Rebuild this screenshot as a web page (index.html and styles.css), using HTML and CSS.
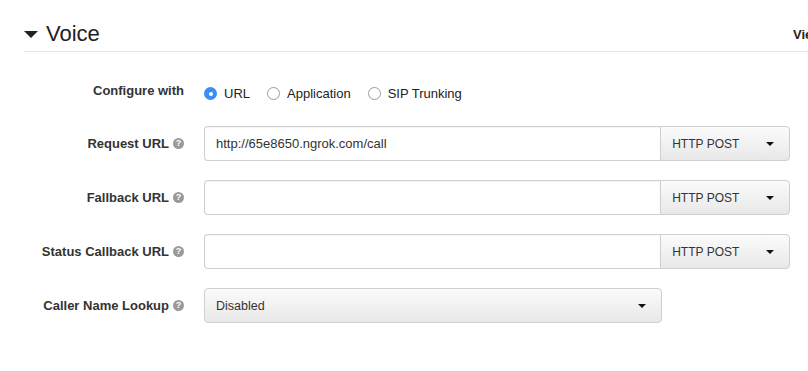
FILE: index.html
```html
<!DOCTYPE html>
<html>
<head>
<meta charset="utf-8">
<link rel="stylesheet" href="styles.css">
</head>
<body>
<div class="page">
  <div class="section-head">
    <div class="title"><span class="toggle"></span><h2>Voice</h2></div>
    <a class="view-link">View Documentation</a>
  </div>
  <div class="form">
    <div class="row row-radio">
      <div class="label">Configure with</div>
      <div class="radios">
        <label class="radio"><span class="dot checked"></span>URL</label>
        <label class="radio"><span class="dot"></span>Application</label>
        <label class="radio"><span class="dot"></span>SIP Trunking</label>
      </div>
    </div>
    <div class="row">
      <div class="label">Request URL<span class="help">?</span></div>
      <div class="group">
        <div class="input">http://65e8650.ngrok.com/call</div>
        <div class="btn">HTTP POST<span class="caret"></span></div>
      </div>
    </div>
    <div class="row">
      <div class="label">Fallback URL<span class="help">?</span></div>
      <div class="group">
        <div class="input"></div>
        <div class="btn">HTTP POST<span class="caret"></span></div>
      </div>
    </div>
    <div class="row">
      <div class="label">Status Callback URL<span class="help">?</span></div>
      <div class="group">
        <div class="input"></div>
        <div class="btn">HTTP POST<span class="caret"></span></div>
      </div>
    </div>
    <div class="row">
      <div class="label">Caller Name Lookup<span class="help">?</span></div>
      <div class="select">Disabled<span class="caret"></span></div>
    </div>
  </div>
</div>
</body>
</html>
```
FILE: styles.css
```css
html, body {
  margin: 0;
  padding: 0;
  overflow: hidden;
  background: #fff;
}
body {
  font-family: "Liberation Sans", Arial, sans-serif;
  color: #333;
  font-size: 13px;
}
.page {
  width: 808px;
  height: 371px;
  overflow: hidden;
}
.section-head {
  margin-left: 24px;
  margin-top: 18px;
  width: 900px;
  display: flex;
  align-items: center;
  height: 32px;
  border-bottom: 1px solid #e3e3e3;
  padding-bottom: 1px;
}
.title {
  flex: 0 0 769px;
  display: flex;
  align-items: center;
}
.toggle {
  width: 0;
  height: 0;
  border-left: 7px solid transparent;
  border-right: 7px solid transparent;
  border-top: 7px solid #222;
  margin-right: 8px;
  margin-top: 1px;
}
h2 {
  margin: 0;
  font-size: 22px;
  font-weight: normal;
  color: #222;
  line-height: 28px;
}
.view-link {
  font-weight: bold;
  font-size: 13px;
  color: #222;
  white-space: nowrap;
}
.form {
  margin-top: 30px;
  display: flex;
  flex-direction: column;
  gap: 19px;
}
.row {
  display: grid;
  grid-template-columns: 184px 1fr;
  column-gap: 20px;
  align-items: center;
  height: 35px;
}
.row-radio {
  height: 25px;
  align-items: start;
}
.label {
  text-align: right;
  font-weight: bold;
  color: #333;
  display: flex;
  justify-content: flex-end;
  align-items: center;
}
.row-radio .label {
  padding-top: 1px;
}
.help {
  display: inline-block;
  width: 11px;
  height: 11px;
  border-radius: 50%;
  background: #9a9a9a;
  color: #fff;
  font-size: 9px;
  font-weight: bold;
  line-height: 11px;
  text-align: center;
  margin-left: 4px;
}
.radios {
  display: flex;
  gap: 17px;
  padding-top: 4px;
}
.radio {
  display: flex;
  align-items: center;
  gap: 7px;
  color: #222;
}
.dot {
  box-sizing: border-box;
  width: 13px;
  height: 13px;
  border-radius: 50%;
  border: 1px solid #9b9b9b;
  background: #fff;
  position: relative;
}
.dot.checked {
  border: none;
  background: #3a8ef5;
}
.dot.checked::after {
  content: "";
  position: absolute;
  left: 4.5px;
  top: 4.5px;
  width: 4px;
  height: 4px;
  border-radius: 50%;
  background: #fff;
}
.group {
  display: flex;
  width: 586px;
  height: 35px;
}
.input {
  box-sizing: border-box;
  width: 457px;
  height: 35px;
  border: 1px solid #cfcfcf;
  border-right: none;
  border-radius: 4px 0 0 4px;
  padding: 0 11px;
  line-height: 33px;
  color: #333;
  box-shadow: inset 0 1px 1px rgba(0,0,0,0.04);
}
.btn, .select {
  box-sizing: border-box;
  height: 35px;
  border: 1px solid #cfcfcf;
  background: linear-gradient(#fbfbfb, #e8e8e8);
  display: flex;
  align-items: center;
  justify-content: space-between;
  font-size: 12px;
  color: #333;
}
.btn {
  width: 130px;
  border-radius: 0 4px 4px 0;
  padding: 0 15px 0 11px;
}
.select {
  width: 458px;
  border-radius: 4px;
  padding: 0 15px 0 11px;
  font-size: 12.5px;
}
.caret {
  width: 0;
  height: 0;
  border-left: 4px solid transparent;
  border-right: 4px solid transparent;
  border-top: 4px solid #111;
}
```
